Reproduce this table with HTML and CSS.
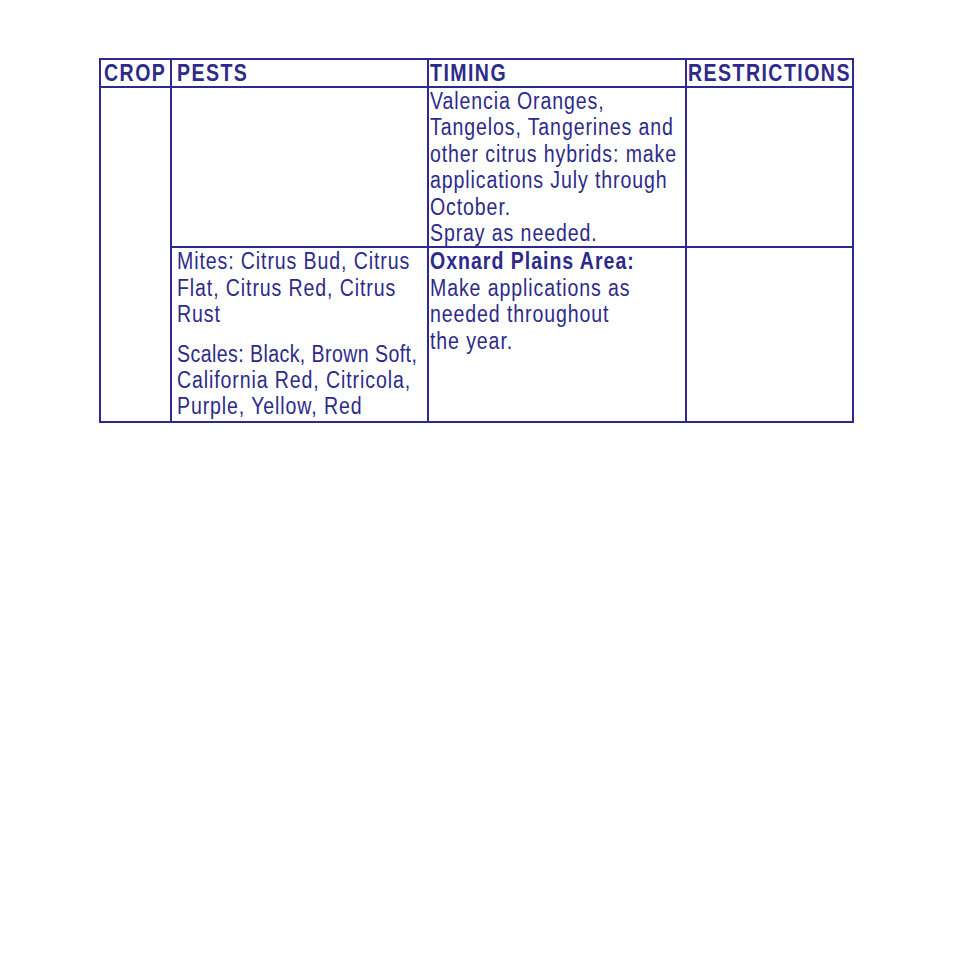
FILE: index.html
```html
<!DOCTYPE html>
<html lang="en">
<head>
<meta charset="utf-8">
<title>Citrus application table</title>
<link rel="stylesheet" href="styles.css">
</head>
<body>
<table class="label-table">
  <colgroup>
    <col class="c-crop">
    <col class="c-pests">
    <col class="c-timing">
    <col class="c-restr">
  </colgroup>
  <thead>
    <tr class="row-head">
      <th class="cell-crop"><div class="fit">CROP</div></th>
      <th class="cell-pests"><div class="fit">PESTS</div></th>
      <th class="cell-timing"><div class="fit">TIMING</div></th>
      <th class="cell-restr"><div class="fit">RESTRICTIONS</div></th>
    </tr>
  </thead>
  <tbody>
    <tr class="row-one">
      <td class="cell-crop" rowspan="2"></td>
      <td class="cell-pests"></td>
      <td class="cell-timing"><div class="fit">Valencia Oranges,<br>Tangelos, Tangerines and<br>other citrus hybrids: make<br>applications July through<br>October.<br>Spray as needed.</div></td>
      <td class="cell-restr"></td>
    </tr>
    <tr class="row-two">
      <td class="cell-pests">
        <div class="fit">
          <p class="para">Mites: Citrus Bud, Citrus<br>Flat, Citrus Red, Citrus<br>Rust</p>
          <p class="para para-gap"><span class="tight">Scales: Black, Brown Soft,</span><br>California Red, Citricola,<br>Purple, Yellow, Red</p>
        </div>
      </td>
      <td class="cell-timing"><div class="fit"><strong class="area">Oxnard Plains Area:</strong><br>Make applications as<br>needed throughout<br>the year.</div></td>
      <td class="cell-restr"></td>
    </tr>
  </tbody>
</table>
</body>
</html>
```

FILE: styles.css
```css
html, body {
  margin: 0;
  padding: 0;
  background: #ffffff;
}

body {
  padding: 58px 0 0 99px;
  color: #2e2a89;
  font-family: "Liberation Sans", Arial, sans-serif;
}

.label-table {
  border-collapse: separate;
  border-spacing: 0;
  table-layout: fixed;
  width: 755px;
  border-left: 2px solid #2e2a89;
  border-top: 2px solid #2e2a89;
}

.c-crop { width: 71px; }
.c-pests { width: 257px; }
.c-timing { width: 258px; }
.c-restr { width: 167px; }

th, td {
  border-right: 2px solid #2e2a89;
  border-bottom: 2px solid #2e2a89;
  vertical-align: top;
  text-align: left;
  padding: 0;
  font-size: 23px;
  line-height: 26.4px;
  font-weight: normal;
  white-space: nowrap;
}

.fit {
  transform: scaleX(0.85);
  transform-origin: 0 0;
  letter-spacing: 1.05px;
}

th .fit {
  font-weight: bold;
  letter-spacing: 1.7px;
  line-height: 26px;
}

.row-head { height: 28px; }
.row-one { height: 158px; }
.row-two { height: 175px; }

.cell-crop { padding-left: 3px; }
.cell-pests { padding-left: 5px; }
.cell-timing { padding-left: 1px; }
.cell-restr { padding-left: 1px; }

.para {
  margin: 0;
}

.para-gap {
  margin-top: 13px;
}

.tight {
  letter-spacing: 0.5px;
}

.area {
  font-weight: bold;
  letter-spacing: 1.15px;
}
```
